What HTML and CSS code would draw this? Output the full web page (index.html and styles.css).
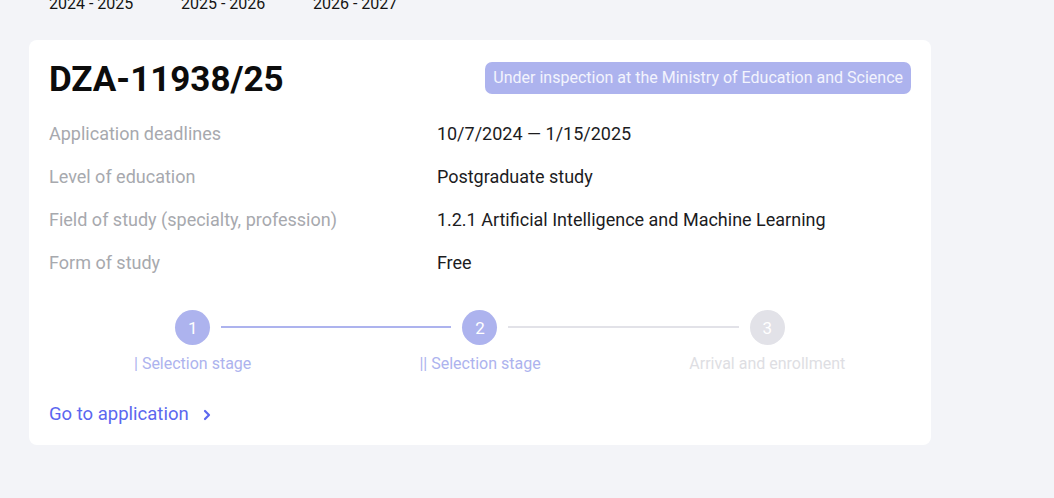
FILE: index.html
```html
<!DOCTYPE html>
<html lang="en">
<head>
<meta charset="utf-8">
<link rel="stylesheet" href="styles.css">
</head>
<body>
<div class="page">
  <div class="tabs">
    <span class="tab">2024 - 2025</span>
    <span class="tab">2025 - 2026</span>
    <span class="tab">2026 - 2027</span>
  </div>
  <div class="card">
    <div class="card-head">
      <h1 class="title">DZA-11938/25</h1>
      <span class="badge">Under inspection at the Ministry of Education and Science</span>
    </div>
    <div class="info">
      <div class="label">Application deadlines</div>
      <div class="value">10/7/2024 — 1/15/2025</div>
      <div class="label">Level of education</div>
      <div class="value">Postgraduate study</div>
      <div class="label">Field of study (specialty, profession)</div>
      <div class="value">1.2.1 Artificial Intelligence and Machine Learning</div>
      <div class="label">Form of study</div>
      <div class="value">Free</div>
    </div>
    <div class="steps">
      <div class="step done line-done">
        <div class="circle">1</div>
        <div class="step-label">| Selection stage</div>
      </div>
      <div class="step done line-todo">
        <div class="circle">2</div>
        <div class="step-label">|| Selection stage</div>
      </div>
      <div class="step todo">
        <div class="circle">3</div>
        <div class="step-label">Arrival and enrollment</div>
      </div>
    </div>
    <a class="link" href="#">Go to application
      <svg class="chev" width="10" height="12" viewBox="0 0 10 12"><path d="M3 2 L7 6 L3 10" fill="none" stroke="currentColor" stroke-width="2.2" stroke-linecap="round" stroke-linejoin="round"/></svg>
    </a>
  </div>
</div>
</body>
</html>
```
FILE: styles.css
```css
* { box-sizing: border-box; }
html, body {
  margin: 0;
  padding: 0;
  background: #f3f4f8;
  font-family: Roboto, "Liberation Sans", Arial, sans-serif;
  overflow: hidden;
}
.page {
  width: 1054px;
  height: 498px;
  padding: 0 123px 0 29px;
}
.tabs {
  display: flex;
  gap: 48px;
  padding-left: 20px;
  margin-top: -5px;
  height: 45px;
  font-size: 16px;
  line-height: 18px;
  color: #141414;
}
.tab { width: 84px; white-space: nowrap; }
.card {
  background: #fff;
  border-radius: 8px;
  padding: 20px 20px 19px;
  width: 902px;
}
.card-head {
  display: flex;
  justify-content: space-between;
  align-items: center;
  height: 40px;
  margin-bottom: 22px;
}
.title {
  margin: 0;
  font-size: 35px;
  line-height: 40px;
  font-weight: 700;
  color: #0c0c0c;
}
.badge {
  background: #adb3ee;
  color: #f3f4fd;
  font-size: 16px;
  line-height: 20px;
  padding: 6px 8px;
  border-radius: 7px;
  margin-top: -4px;
}
.info {
  display: grid;
  grid-template-columns: 45% 55%;
  row-gap: 19px;
  font-size: 18px;
  line-height: 24px;
}
.label { color: #a7a9ae; }
.value { color: #1c1c1e; }
.steps {
  display: grid;
  grid-template-columns: repeat(3, 1fr);
  margin-top: 35px;
}
.step {
  position: relative;
  display: flex;
  flex-direction: column;
  align-items: center;
}
.circle {
  width: 35px;
  height: 35px;
  border-radius: 50%;
  display: flex;
  align-items: center;
  justify-content: center;
  font-size: 17px;
  color: #fff;
  background: #adb3ee;
}
.step.todo .circle { background: #e2e2e8; }
.step-label {
  margin-top: 9px;
  font-size: 16px;
  line-height: 20px;
  color: #adb3ee;
}
.step.todo .step-label { color: #dedee3; }
.step.line-done::after,
.step.line-todo::after {
  content: "";
  position: absolute;
  top: 16px;
  left: calc(50% + 28.5px);
  width: calc(100% - 57px);
  height: 2px;
  background: #adb3ee;
}
.step.line-todo::after { background: #e2e2e8; }
.link {
  display: inline-flex;
  align-items: center;
  gap: 13px;
  margin-top: 28px;
  font-size: 18.5px;
  line-height: 24px;
  color: #5c67ef;
  text-decoration: none;
}
.chev { color: #5c67ef; margin-top: 2px; }
```
